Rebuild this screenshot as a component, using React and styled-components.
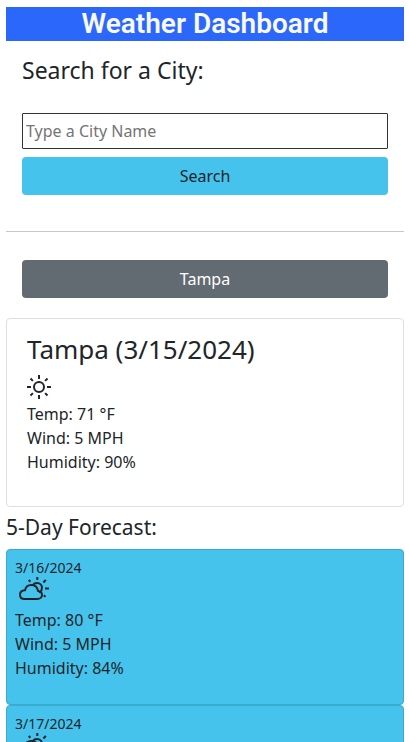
import React from 'react';
import styled, { createGlobalStyle } from 'styled-components';

const GlobalStyle = createGlobalStyle`
  *, *::before, *::after { box-sizing: border-box; }
  html { overflow-x: hidden; scrollbar-width: none; }
  body {
    margin: 0;
    background: #fff;
    color: #212529;
    font: 400 16px/24px "Noto Sans", "Open Sans", sans-serif;
  }
`;

const Page = styled.div`
  padding: 7px 5px 0 6px;
`;

const Header = styled.header`
  background: #2c67fc;
  color: #f8f9fa;
  text-align: center;
`;

const Brand = styled.h1`
  margin: 0;
  font: 600 28px/34px Roboto, sans-serif;
`;

const SearchForm = styled.form`
  display: flex;
  flex-direction: column;
  gap: 8px;
  padding: 14px 16px 36px;
`;

const SearchTitle = styled.label`
  margin-bottom: 20px;
  font-size: 23px;
  line-height: 30px;
`;

const CityInput = styled.input`
  width: 100%;
  height: 36px;
  padding: 1px 3px;
  border: 1px solid #333;
  border-radius: 1px;
  background: #fff;
  color: inherit;
  font: inherit;
  &::placeholder { color: #757575; opacity: 1; }
`;

const Button = styled.button`
  width: 100%;
  padding: 7px 12px;
  border: 0;
  border-radius: 4px;
  background: ${(p) => (p.$muted ? '#636b72' : '#45c3ed')};
  color: ${(p) => (p.$muted ? '#fff' : '#212529')};
  font: inherit;
  cursor: pointer;
`;

const History = styled.nav`
  padding: 28px 16px 20px;
  border-top: 1px solid #c7c8c9;
`;

const CurrentCard = styled.section`
  min-height: 189px;
  padding: 14px 20px 32px;
  border: 1px solid #dfdfdf;
  border-radius: 4px;
`;

const CityTitle = styled.h2`
  margin: 0 0 10px;
  font-size: 26px;
  font-weight: inherit;
  line-height: 32px;
`;

const Glyph = styled.svg`
  display: block;
  width: ${(p) => (p.$wide ? 32 : 24)}px;
  height: 24px;
  margin-left: ${(p) => (p.$wide ? 3 : 0)}px;
  fill: none;
  stroke: currentColor;
  stroke-width: 2;
  stroke-linecap: round;
  stroke-linejoin: round;
`;

const Readings = styled.ul`
  margin: ${(p) => (p.$spaced ? 7 : 3)}px 0 0;
  padding: 0;
  list-style: none;
`;

const ForecastTitle = styled.h3`
  margin: 7px 0 8px;
  font-size: 21px;
  font-weight: inherit;
  line-height: 27px;
`;

const DayCard = styled.article`
  padding: 8px 8px 24px;
  border: 1px solid #3baad0;
  border-radius: 4px;
  background: #45c3ed;
`;

const DayDate = styled.h4`
  margin: 0;
  font-size: 14px;
  font-weight: inherit;
  line-height: 19px;
`;

const days = [
  { date: '3/16/2024', temp: 80, wind: 5, humidity: 84 },
  { date: '3/17/2024', temp: 82, wind: 6, humidity: 78 },
];

function SunIcon() {
  return (
    <Glyph viewBox="0 0 24 24" role="img" aria-label="Clear sky">
      <circle cx="12" cy="12" r="5" />
      <path strokeLinecap="butt" d="M12 0v4M12 20v4M0 12h4M20 12h4M3.5 3.5l2.4 2.4M18.1 18.1l2.4 2.4M20.5 3.5l-2.4 2.4M5.9 18.1l-2.4 2.4" />
    </Glyph>
  );
}

function CloudSunIcon() {
  return (
    <Glyph $wide viewBox="0 0 32 24" role="img" aria-label="Partly cloudy">
      <path d="M6.5 22H19.5C22 22 24 20.2 24 18C24 15.7 22.4 14.2 20 14C19.4 10.3 16.7 8 13.3 8C10.1 8 7.6 10.2 7 13.2C4 13.4 2 15.2 2 17.7C2 20.3 3.9 22 6.5 22Z" />
      <path d="M14.8 8C15.8 6.6 17.4 6 19 6C22 6 24 8 24 10.8C24 12.8 23.1 14.4 21.8 15.3" />
      <path strokeLinecap="butt" d="M19.3 0v3M10.7 3l1.7 1.7M27.8 2.8l-2.4 2.7M27 11.5h4M25.8 18.2l1.7 1.7" />
    </Glyph>
  );
}

function WeatherReadings({ temp, wind, humidity, spaced }) {
  return (
    <Readings $spaced={spaced}>
      <li>Temp: {temp} °F</li>
      <li>Wind: {wind} MPH</li>
      <li>Humidity: {humidity}%</li>
    </Readings>
  );
}

export default function App() {
  return (
    <>
      <GlobalStyle />
      <Page>
        <Header>
          <Brand>Weather Dashboard</Brand>
        </Header>
        <SearchForm onSubmit={(e) => e.preventDefault()}>
          <SearchTitle htmlFor="city">Search for a City:</SearchTitle>
          <CityInput id="city" type="text" placeholder="Type a City Name" />
          <Button type="submit">Search</Button>
        </SearchForm>
        <History aria-label="Recent cities">
          <Button type="button" $muted>Tampa</Button>
        </History>
        <main>
          <CurrentCard>
            <CityTitle>Tampa (3/15/2024)</CityTitle>
            <SunIcon />
            <WeatherReadings temp={71} wind={5} humidity={90} />
          </CurrentCard>
          <ForecastTitle>5-Day Forecast:</ForecastTitle>
          {days.map((day) => (
            <DayCard key={day.date}>
              <DayDate>{day.date}</DayDate>
              <CloudSunIcon />
              <WeatherReadings {...day} spaced />
            </DayCard>
          ))}
        </main>
      </Page>
    </>
  );
}
